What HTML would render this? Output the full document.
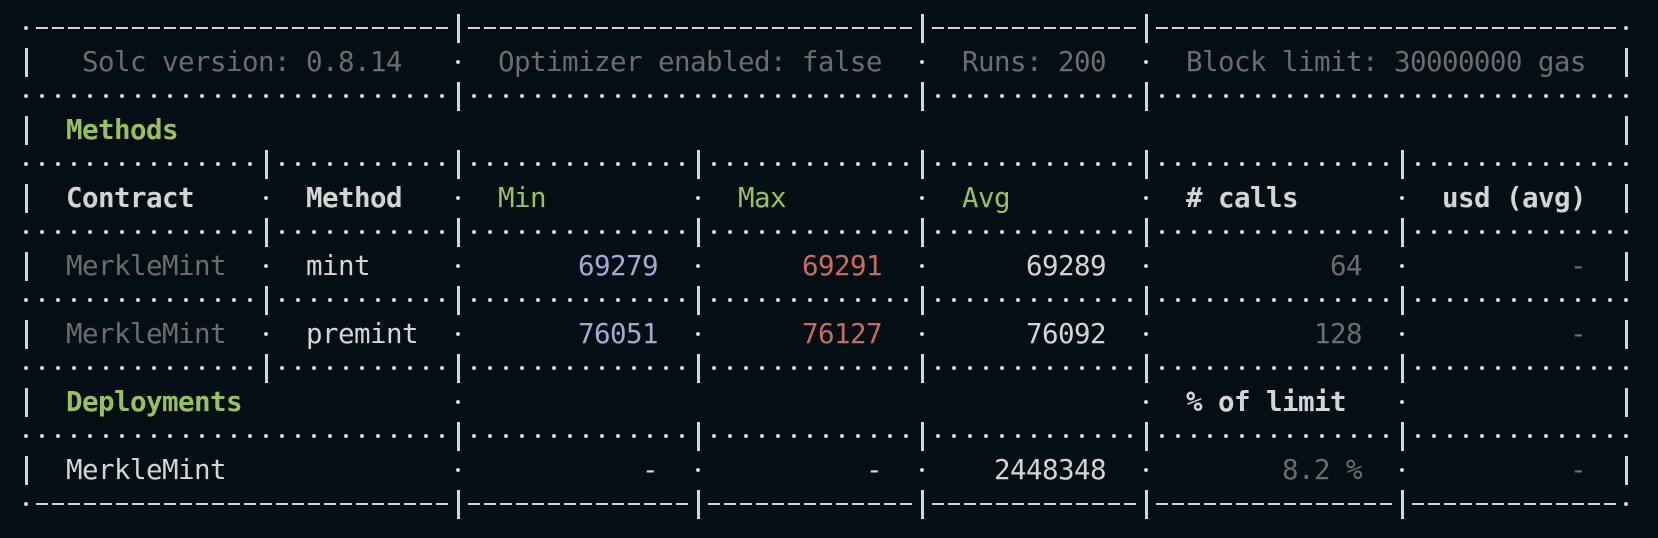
<!DOCTYPE html>
<html><head><meta charset="utf-8"><style>
html,body{margin:0;padding:0;background:#040f15;width:1658px;height:538px;overflow:hidden}
.r{position:absolute;left:0;width:1658px;height:34px}
.t{position:absolute;top:0;white-space:pre;line-height:34px;font-family:"DejaVu Sans Mono","Liberation Mono",monospace;font-size:27.5px;letter-spacing:-0.56px;color:#d4d4d4}
.g{color:#6c6c6c}.gr{color:#98c15e}.bd{font-weight:bold}.lv{color:#a6a8d0}.rd{color:#c96b5a}
.b{position:absolute;top:0;width:16px;height:34px;background:#040f15}
.b::after{content:'';position:absolute;left:7px;top:2.5px;width:2.5px;height:29px;background:#d4d4d4}
.d{position:absolute;top:14.5px;width:4px;height:4px;border-radius:50%;background:#d4d4d4}
.dl{position:absolute;left:18px;top:0;width:1616px;height:34px;background-image:radial-gradient(circle at 8px 17px,#d4d4d4 1.8px,transparent 2.3px);background-size:16px 34px}
.ds{position:absolute;left:34px;top:15.5px;width:1584px;height:2.5px;background:repeating-linear-gradient(90deg,transparent 0 2px,#d4d4d4 2px 14px,transparent 14px 16px)}
</style></head><body>

<div class="r" style="top:11.3px"><div class="ds"></div><div class="d" style="left:24px"></div><div class="d" style="left:1624px"></div><div class="b" style="left:450px"></div><div class="b" style="left:914px"></div><div class="b" style="left:1138px"></div></div>

<div class="r" style="top:45.3px"><div class="b" style="left:18px"></div><div class="b" style="left:1618px"></div><div class="d" style="left:456px"></div><div class="d" style="left:920px"></div><div class="d" style="left:1144px"></div>
<span class="t g" style="left:82px">Solc version: 0.8.14</span><span class="t g" style="left:498px">Optimizer enabled: false</span><span class="t g" style="left:962px">Runs: 200</span><span class="t g" style="left:1186px">Block limit: 30000000 gas</span></div>

<div class="r" style="top:79.3px"><div class="dl"></div><div class="b" style="left:450px"></div><div class="b" style="left:914px"></div><div class="b" style="left:1138px"></div></div>

<div class="r" style="top:113.3px"><div class="b" style="left:18px"></div><div class="b" style="left:1618px"></div><span class="t gr bd" style="left:66px">Methods</span></div>

<div class="r" style="top:147.3px"><div class="dl"></div><div class="b" style="left:258px"></div><div class="b" style="left:450px"></div><div class="b" style="left:690px"></div><div class="b" style="left:914px"></div><div class="b" style="left:1138px"></div><div class="b" style="left:1394px"></div></div>

<div class="r" style="top:181.3px"><div class="b" style="left:18px"></div><div class="b" style="left:1618px"></div><div class="d" style="left:264px"></div><div class="d" style="left:456px"></div><div class="d" style="left:696px"></div><div class="d" style="left:920px"></div><div class="d" style="left:1144px"></div><div class="d" style="left:1400px"></div>
<span class="t bd" style="left:66px">Contract</span><span class="t bd" style="left:306px">Method</span><span class="t gr" style="left:498px">Min</span><span class="t gr" style="left:738px">Max</span><span class="t gr" style="left:962px">Avg</span><span class="t bd" style="left:1186px"># calls</span><span class="t bd" style="left:1442px">usd (avg)</span></div>

<div class="r" style="top:215.3px"><div class="dl"></div><div class="b" style="left:258px"></div><div class="b" style="left:450px"></div><div class="b" style="left:690px"></div><div class="b" style="left:914px"></div><div class="b" style="left:1138px"></div><div class="b" style="left:1394px"></div></div>

<div class="r" style="top:249.3px"><div class="b" style="left:18px"></div><div class="b" style="left:1618px"></div><div class="d" style="left:264px"></div><div class="d" style="left:456px"></div><div class="d" style="left:696px"></div><div class="d" style="left:920px"></div><div class="d" style="left:1144px"></div><div class="d" style="left:1400px"></div>
<span class="t g" style="left:66px">MerkleMint</span><span class="t" style="left:306px">mint</span><span class="t lv" style="left:578px">69279</span><span class="t rd" style="left:802px">69291</span><span class="t" style="left:1026px">69289</span><span class="t g" style="left:1330px">64</span><span class="t g" style="left:1570px">-</span></div>

<div class="r" style="top:283.3px"><div class="dl"></div><div class="b" style="left:258px"></div><div class="b" style="left:450px"></div><div class="b" style="left:690px"></div><div class="b" style="left:914px"></div><div class="b" style="left:1138px"></div><div class="b" style="left:1394px"></div></div>

<div class="r" style="top:317.3px"><div class="b" style="left:18px"></div><div class="b" style="left:1618px"></div><div class="d" style="left:264px"></div><div class="d" style="left:456px"></div><div class="d" style="left:696px"></div><div class="d" style="left:920px"></div><div class="d" style="left:1144px"></div><div class="d" style="left:1400px"></div>
<span class="t g" style="left:66px">MerkleMint</span><span class="t" style="left:306px">premint</span><span class="t lv" style="left:578px">76051</span><span class="t rd" style="left:802px">76127</span><span class="t" style="left:1026px">76092</span><span class="t g" style="left:1314px">128</span><span class="t g" style="left:1570px">-</span></div>

<div class="r" style="top:351.3px"><div class="dl"></div><div class="b" style="left:258px"></div><div class="b" style="left:450px"></div><div class="b" style="left:690px"></div><div class="b" style="left:914px"></div><div class="b" style="left:1138px"></div><div class="b" style="left:1394px"></div></div>

<div class="r" style="top:385.3px"><div class="b" style="left:18px"></div><div class="b" style="left:1618px"></div><div class="d" style="left:456px"></div><div class="d" style="left:1144px"></div><div class="d" style="left:1400px"></div>
<span class="t gr bd" style="left:66px">Deployments</span><span class="t bd" style="left:1186px">% of limit</span></div>

<div class="r" style="top:419.3px"><div class="dl"></div><div class="b" style="left:450px"></div><div class="b" style="left:690px"></div><div class="b" style="left:914px"></div><div class="b" style="left:1138px"></div><div class="b" style="left:1394px"></div></div>

<div class="r" style="top:453.3px"><div class="b" style="left:18px"></div><div class="b" style="left:1618px"></div><div class="d" style="left:456px"></div><div class="d" style="left:696px"></div><div class="d" style="left:920px"></div><div class="d" style="left:1144px"></div><div class="d" style="left:1400px"></div>
<span class="t" style="left:66px">MerkleMint</span><span class="t" style="left:642px">-</span><span class="t" style="left:866px">-</span><span class="t" style="left:994px">2448348</span><span class="t g" style="left:1282px">8.2 %</span><span class="t g" style="left:1570px">-</span></div>

<div class="r" style="top:487.3px"><div class="ds"></div><div class="d" style="left:24px"></div><div class="d" style="left:1624px"></div><div class="b" style="left:450px"></div><div class="b" style="left:690px"></div><div class="b" style="left:914px"></div><div class="b" style="left:1138px"></div><div class="b" style="left:1394px"></div></div>

</body></html>
